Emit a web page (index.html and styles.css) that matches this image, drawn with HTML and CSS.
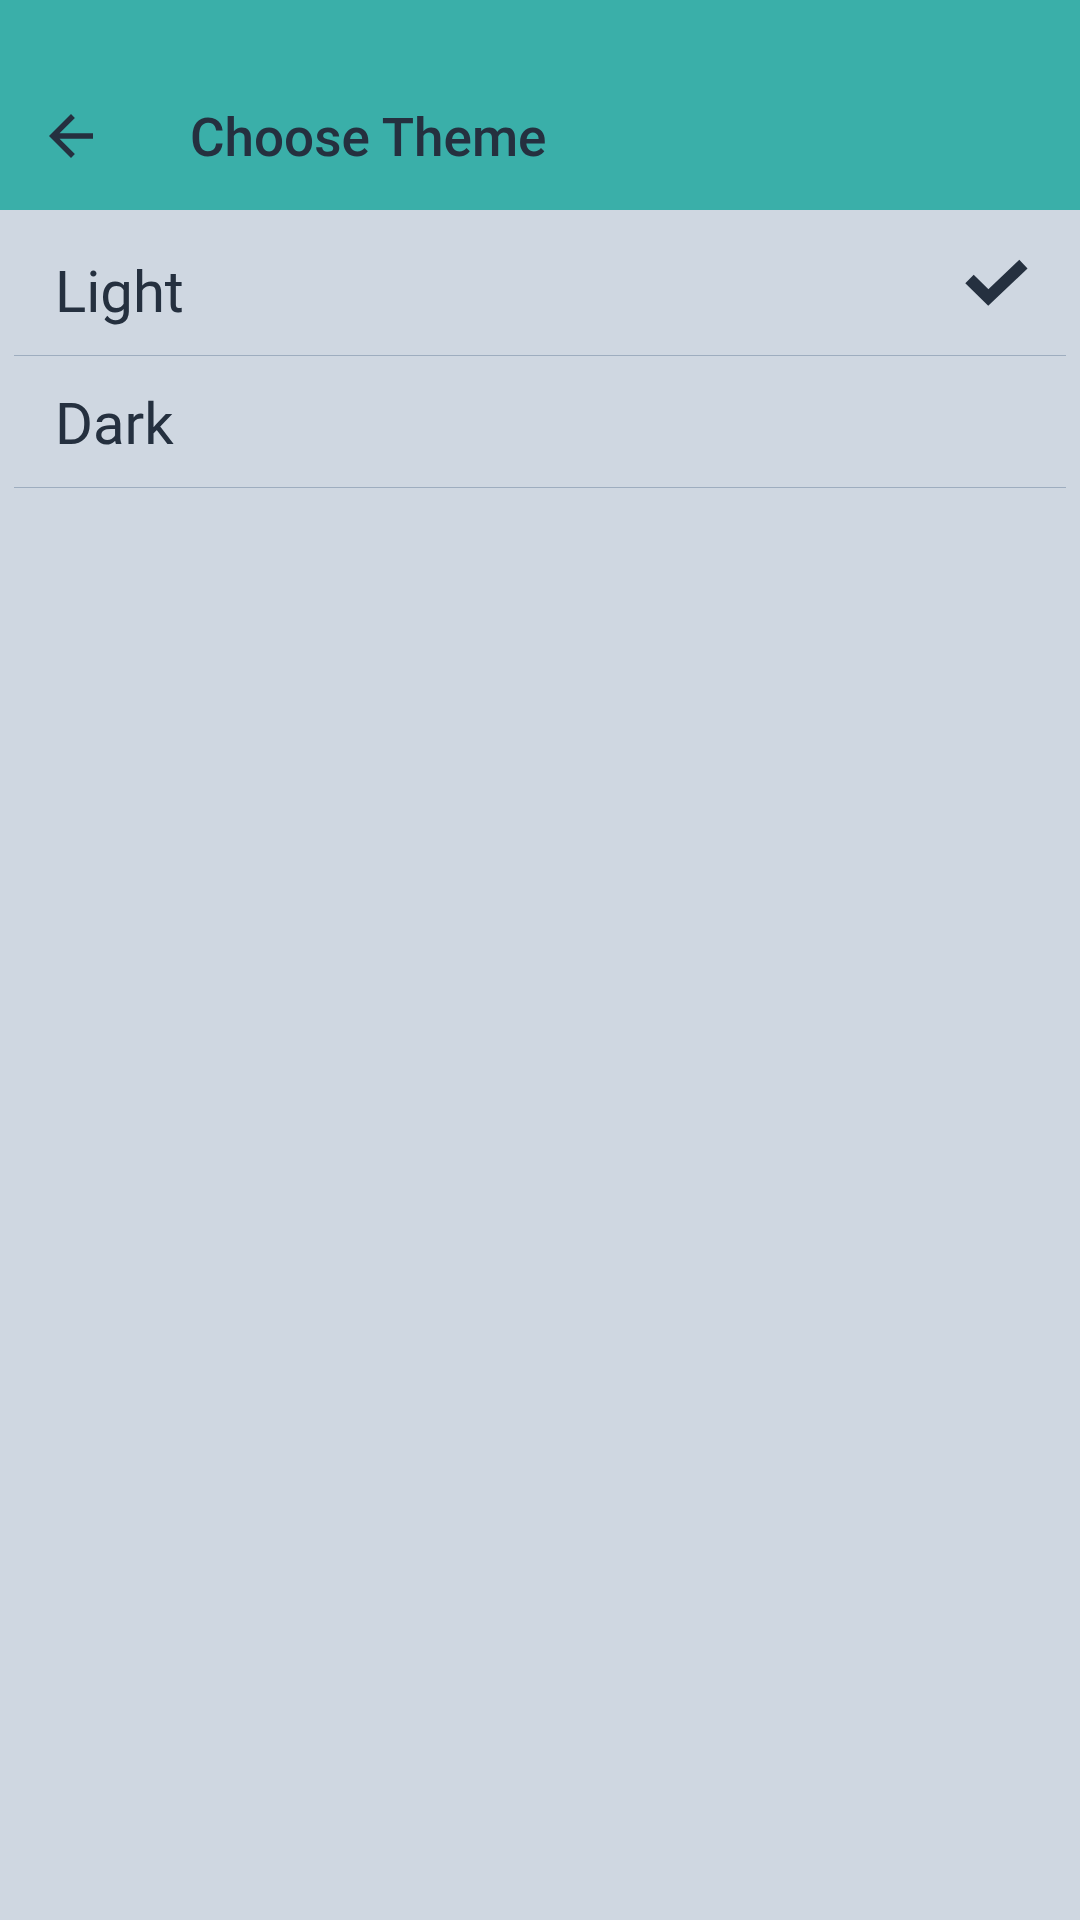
FILE: index.html
```html
<!DOCTYPE html>
<html lang="en">
<head>
<meta charset="utf-8">
<title>Choose Theme</title>
<link rel="stylesheet" href="styles.css">
</head>
<body>
<div class="screen">
  <header class="appbar">
    <div class="toolbar">
      <button class="back" aria-label="Back">
        <svg viewBox="0 0 24 24" width="66" height="66"><path d="M20 11H7.83l5.59-5.59L12 4l-8 8 8 8 1.41-1.41L7.83 13H20v-2z" fill="#25303f"/></svg>
      </button>
      <h1 class="title">Choose Theme</h1>
    </div>
  </header>
  <ul class="list">
    <li class="row">
      <span class="label">Light</span>
      <svg class="check" viewBox="0 0 70 70" width="70" height="70"><polyline points="9.5,29 28.3,47.5 63.4,14.2" fill="none" stroke="#25303f" stroke-width="12" stroke-linejoin="miter" stroke-linecap="butt"/></svg>
    </li>
    <li class="row">
      <span class="label">Dark</span>
    </li>
  </ul>
</div>
</body>
</html>
```

FILE: styles.css
```css
html, body {
  margin: 0;
  padding: 0;
}
body {
  background: #cfd7e1;
  font-family: Roboto, "Liberation Sans", sans-serif;
  color: #25303f;
}
.screen {
  width: 1080px;
  height: 1920px;
  background: #cfd7e1;
}
.appbar {
  background: #3aafa9;
  height: 210px;
  box-sizing: border-box;
  padding-top: 66px;
}
.toolbar {
  height: 144px;
  display: flex;
  align-items: center;
}
.back {
  margin: 0 0 4px 38px;
  padding: 0;
  border: 0;
  background: transparent;
  width: 66px;
  height: 66px;
  display: flex;
}
.title {
  margin: 0 0 0 86px;
  font-size: 53px;
  font-weight: 500;
  line-height: normal;
  color: #25303f;
}
.list {
  list-style: none;
  margin: 0;
  padding: 14px 0 0;
}
.row {
  margin: 0 14px;
  height: 132px;
  box-sizing: border-box;
  border-bottom: 1px solid #9eadbf;
  display: flex;
  align-items: center;
  justify-content: space-between;
  padding: 4px 36px 0 41px;
}
.label {
  font-size: 58px;
  line-height: normal;
}
.check {
  margin-bottom: 13px;
}
```
